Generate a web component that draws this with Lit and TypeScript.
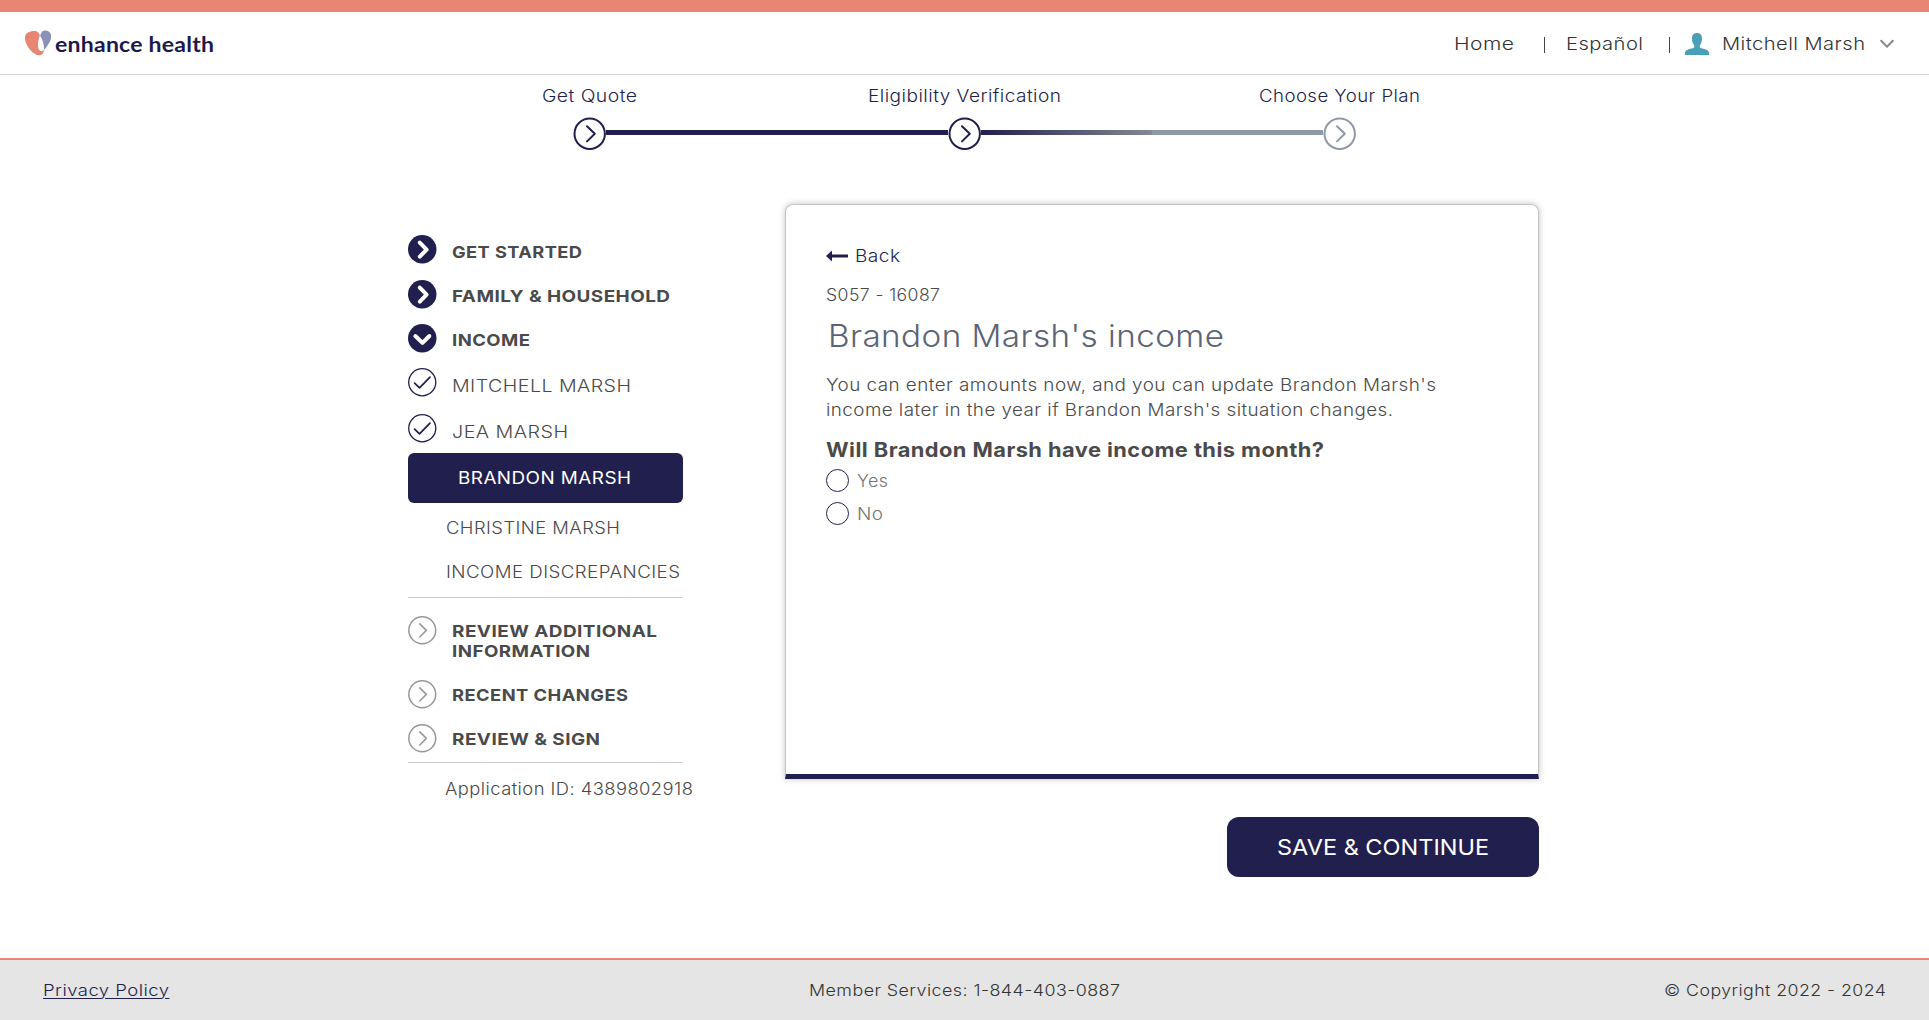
import { LitElement, html, css, svg } from "lit";
import { customElement, property } from "lit/decorators.js";
import { classMap } from "lit/directives/class-map.js";

/** Single line of text, lightly tracked and widened to fill a given measure. */
@customElement("tracked-text")
class TrackedText extends LitElement {
  @property({ type: Number }) measure = 0;
  @property({ type: Number }) tracking = 0.4;
  @property() text = "";

  static styles = css`
    :host { display: inline-block; white-space: pre; text-align: left; text-decoration: inherit; }
    .line { display: inline-block; transform-origin: 0 50%; margin-left: -1px; text-decoration: inherit; }
  `;

  updated() {
    const line = this.renderRoot.querySelector(".line") as HTMLElement;
    line.style.transform = "none";
    line.style.letterSpacing = `${this.tracking}px`;
    const natural = line.getBoundingClientRect().width - this.tracking;
    const scale = (this.measure + 2) / natural;
    line.style.transform = `scaleX(${scale.toFixed(4)})`;
    this.style.width = `${this.measure}px`;
  }

  render() {
    return html`<span class="line">${this.text}</span>`;
  }
}

const t = (text: string, measure: number, tracking = 0.4) =>
  html`<tracked-text .text=${text} .measure=${measure} .tracking=${tracking}></tracked-text>`;

type IconKind = "right" | "down" | "check" | "todo";

interface NavItem {
  lines: [string, number][];
  icon: IconKind;
  height: number;
  drop: number;
  strong?: boolean;
}

const topItems: NavItem[] = [
  { lines: [["GET STARTED", 128]], icon: "right", height: 45, drop: 7, strong: true },
  { lines: [["FAMILY & HOUSEHOLD", 216]], icon: "right", height: 44, drop: 6, strong: true },
  { lines: [["INCOME", 76]], icon: "down", height: 44, drop: 6, strong: true },
  { lines: [["MITCHELL MARSH", 177]], icon: "check", height: 46, drop: 8 },
  { lines: [["JEA MARSH", 114]], icon: "check", height: 39, drop: 8 },
];

const bottomItems: NavItem[] = [
  { lines: [["REVIEW ADDITIONAL", 203], ["INFORMATION", 136]], icon: "todo", height: 64, drop: 5, strong: true },
  { lines: [["RECENT CHANGES", 174]], icon: "todo", height: 44, drop: 5, strong: true },
  { lines: [["REVIEW & SIGN", 146]], icon: "todo", height: 38, drop: 5, strong: true },
];

const icons: Record<IconKind, unknown> = {
  right: svg`<circle cx="14" cy="14" r="14" fill="#211f4d"/><path d="M11.6 7.4 18.3 14.4 11.6 21.2" fill="none" stroke="#fff" stroke-width="3.9" stroke-linecap="round" stroke-linejoin="round"/>`,
  down: svg`<circle cx="14" cy="14" r="14" fill="#211f4d"/><path d="M7.2 11.8 14.2 18.6 21 11.8" fill="none" stroke="#fff" stroke-width="3.9" stroke-linecap="round" stroke-linejoin="round"/>`,
  check: svg`<circle cx="14" cy="14" r="13.3" fill="none" stroke="#211f4d" stroke-width="1.3"/><path d="M6.5 14.8 11.3 19.6 21.6 9" fill="none" stroke="#211f4d" stroke-width="1.7" stroke-linecap="round" stroke-linejoin="round"/>`,
  todo: svg`<circle cx="14" cy="14" r="13.2" fill="none" stroke="#979797" stroke-width="1.5"/><path d="M11.6 7.7 18 14.1 11.6 20.6" fill="none" stroke="#979797" stroke-width="1.5" stroke-linecap="round" stroke-linejoin="round"/>`,
};

@customElement("app-root")
class AppRoot extends LitElement {
  static styles = css`
    :host {
      display: flex; flex-direction: column; height: 1020px; background: #fff;
      font-family: Inter, "Liberation Sans", sans-serif; font-weight: 300; font-size: 16.7px;
      line-height: 24px; color: #4a4a4a; box-sizing: border-box;
    }
    * { box-sizing: border-box; }
    svg { display: block; flex: none; }
    .header { height: 75px; border-top: 12px solid #e78673; border-bottom: 1px solid #d4d4d4; display: flex; align-items: center; padding: 0 35px 0 25px; color: #333; flex: none; }
    .brand { display: flex; gap: 5px; align-items: center; margin-right: auto; color: #1d1a4b; }
    .brand-name { font-family: Lato, sans-serif; font-weight: 700; font-size: 20px; padding-top: 1px; }
    .nav { display: flex; align-items: center; font-size: 17.6px; padding-top: 1px; }
    .bar { width: 1px; height: 16px; background: #444; margin-top: 2px; }
    .bar-a { margin: 2px 22px 0 31px; }
    .bar-b { margin: 2px 15px 0 27px; }
    .user { margin-right: 14px; }
    .name { margin-right: 16px; }
    .steps { display: flex; flex-direction: column; height: 129px; padding-top: 9px; color: #211f4d; flex: none; }
    .labels { display: grid; grid-template-columns: repeat(3, 375px); margin-left: 402px; text-align: center; height: 33px; }
    .track { display: flex; margin-left: 573px; width: 783px; height: 33px; align-items: center; }
    .seg { flex: 1; height: 5px; background: #211f4d; margin-top: -2px; }
    .seg-half { background: linear-gradient(90deg, #211f4d, #848993 50%, #8f99a5 50%); }
    .main { display: flex; padding-left: 408px; flex: 1; }
    .side { width: 275px; padding-top: 31px; margin-right: 102px; }
    .row { display: flex; gap: 16px; }
    .row-text { display: flex; flex-direction: column; line-height: 20px; font-size: 17.4px; }
    .strong { font-weight: 700; font-size: 16.6px; }
    .current { background: #211f4d; color: #fff; border-radius: 6px; height: 50px; padding: 13px 0 0 51px; font-weight: 400; }
    .sub { height: 44px; padding: 13px 0 0 39px; }
    .sub-last { height: 50px; }
    .rule { height: 1px; background: #cccccc; }
    .todo { padding-top: 18px; }
    .appid { padding: 14px 0 0 38px; font-size: 16.8px; white-space: nowrap; }
    .panel { width: 754px; display: flex; flex-direction: column; align-items: flex-end; }
    .card { width: 754px; height: 575px; border: 1px solid #c4c4c4; border-bottom: 5px solid #211f4d; border-radius: 8px 8px 0 0; box-shadow: 0 0 6px rgba(0, 0, 0, 0.25); padding: 39px 0 0 41px; display: flex; flex-direction: column; align-items: flex-start; }
    .back { display: flex; align-items: center; gap: 8px; color: #211f4d; height: 24px; margin-left: -1px; }
    .code { margin-top: 15px; }
    .title { margin: 11px 0 0 2px; font-size: 30.5px; font-weight: 300; line-height: 36px; color: #5b6474; }
    .copy { margin-top: 19px; line-height: 25px; display: flex; flex-direction: column; align-items: flex-start; }
    .question { margin-top: 14px; font-size: 19.5px; font-weight: 700; line-height: 26px; }
    .option { display: flex; align-items: center; gap: 9px; margin-left: -1px; height: 33px; color: #747474; font-size: 16.8px; }
    .option-first { margin-top: 1px; }
    .radio { width: 23px; height: 23px; border: 1px solid #211f4d; border-radius: 50%; }
    .save { margin-top: 38px; width: 312px; height: 60px; border: 0; border-radius: 12px; background: #211f4d; color: #fff; font: 400 22px/60px Inter, sans-serif; padding: 0; }
    .footer { height: 62px; flex: none; border-top: 2px solid #e78673; background: #e5e5e5; color: #333; display: grid; grid-template-columns: 1fr auto 1fr; align-items: center; padding: 0 44px 1px; font-size: 16.3px; }
    .privacy { color: #211f4d; text-decoration: underline; text-underline-offset: 2px; text-decoration-thickness: 1px; justify-self: start; }
    .copyright { justify-self: end; }
  `;

  private stepIcon(color: string) {
    return html`<svg width="33" height="33" viewBox="0 0 33 33" fill="none" stroke=${color} stroke-linecap="round" stroke-linejoin="round">
      <circle cx="16.700" cy="16.800" r="15.200" stroke-width="2"/><path d="M14 9.200 21.800 16.800 14 24.400" stroke-width="2"/></svg>`;
  }

  private row(item: NavItem) {
    return html`<div class="row" style="height:${item.height}px">
      <svg width="28.500" height="28.500" viewBox="0 0 28 28">${icons[item.icon]}</svg>
      <div class=${classMap({ "row-text": true, strong: !!item.strong })} style="padding-top:${item.drop}px">
        ${item.lines.map(([text, w]) => t(text, w))}
      </div>
    </div>`;
  }

  render() {
    return html`
      <header class="header">
        <div class="brand">
          <svg width="26" height="26" viewBox="0 0 26 26">
            <path d="M0 8C0 3 4 1 9 1c3.500 0 5.600 2 5.800 5C13.600 9 12.800 12 13 16c.2 3.500 1.600 5 3.300 5 1.200 0 2-.4 2.700-1.200-.2 3-1.800 5.500-4.700 5.500C8 25.300 0 15 0 8Z" fill="#e78673"/>
            <path d="M15.200 6C15.600 2.500 17.500.5 20.300.5c3.500 0 5.900 2.500 5.900 6C26.200 11 23 15 19 20 19 14 18 10 15.200 6Z" fill="#8b90b6"/>
          </svg>
          <span class="brand-name">${t("enhance health", 157, 0.2)}</span>
        </div>
        <nav class="nav">
          ${t("Home", 58)}<span class="bar bar-a"></span>
          ${t("Español", 75)}<span class="bar bar-b"></span>
          <svg class="user" width="24" height="22" viewBox="0 0 24 22"><path d="M12 0C15.400 0 17 2.200 17 5.500c0 3-.9 5.300-2.200 6.700v2.600c3.500 1.200 9.200 1.700 9.200 5.200v2H0v-2c0-3.500 5.700-4 9.200-5.200v-2.600C7.900 10.800 7 8.500 7 5.500 7 2.200 8.600 0 12 0Z" fill="#4a9fb8"/></svg>
          <span class="name">${t("Mitchell Marsh", 141)}</span>
          <svg width="14" height="9" viewBox="0 0 14 9"><path d="M1.200 1.800 7 7.700 12.800 1.800" fill="none" stroke="#8a8a8a" stroke-width="2" stroke-linecap="round"/></svg>
        </nav>
      </header>

      <section class="steps">
        <div class="labels">
          <span>${t("Get Quote", 93)}</span>
          <span>${t("Eligibility Verification", 191)}</span>
          <span>${t("Choose Your Plan", 159)}</span>
        </div>
        <div class="track">
          ${this.stepIcon("#211f4d")}<span class="seg"></span>
          ${this.stepIcon("#211f4d")}<span class="seg seg-half"></span>
          ${this.stepIcon("#8f99a5")}
        </div>
      </section>

      <main class="main">
        <aside class="side">
          ${topItems.map((i) => this.row(i))}
          <div class="current">${t("BRANDON MARSH", 171)}</div>
          <div class="sub">${t("CHRISTINE MARSH", 172)}</div>
          <div class="sub sub-last">${t("INCOME DISCREPANCIES", 232)}</div>
          <div class="rule"></div>
          <div class="todo">${bottomItems.map((i) => this.row(i))}</div>
          <div class="rule"></div>
          <div class="appid">${t("Application ID: 4389802918", 246)}</div>
        </aside>
        <div class="panel">
          <section class="card">
            <div class="back">
              <svg width="22" height="12" viewBox="0 0 22 12"><path d="M0 6 6 .5V4.600H22V7.400H6V11.500Z" fill="#211f4d"/></svg>
              ${t("Back", 43)}
            </div>
            <div class="code">${t("S057 - 16087", 112)}</div>
            <h1 class="title">${t("Brandon Marsh's income", 394)}</h1>
            <div class="copy">
              ${t("You can enter amounts now, and you can update Brandon Marsh's", 608)}
              ${t("income later in the year if Brandon Marsh's situation changes.", 565)}
            </div>
            <div class="question">${t("Will Brandon Marsh have income this month?", 496)}</div>
            <label class="option option-first"><span class="radio"></span>${t("Yes", 29)}</label>
            <label class="option"><span class="radio"></span>${t("No", 24)}</label>
          </section>
          <button class="save">${t("SAVE & CONTINUE", 210, 0)}</button>
        </div>
      </main>

      <footer class="footer">
        <a class="privacy">${t("Privacy Policy", 124)}</a>
        <span>${t("Member Services: 1-844-403-0887", 309)}</span>
        <span class="copyright">${t("© Copyright 2022 - 2024", 220)}</span>
      </footer>
    `;
  }
}
